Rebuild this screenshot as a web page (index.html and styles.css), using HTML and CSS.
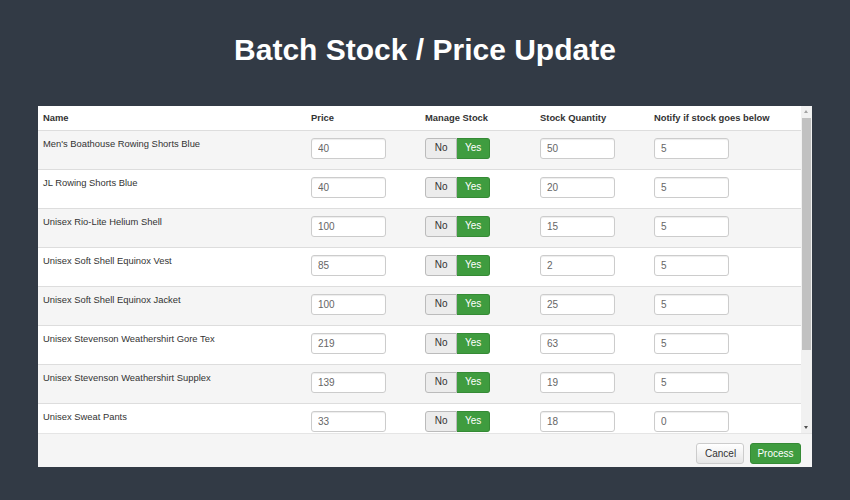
FILE: index.html
```html
<!DOCTYPE html>
<html>
<head>
    <link rel="stylesheet" href="styles.css">
</head>
<body>
    <h1 class="title">Batch Stock / Price Update</h1>

    <div class="panel">
        <div class="table-area">
            <div class="table-wrap">
                <table class="stock-table">
                    <thead>
                        <tr>
                            <th class="col-name">Name</th>
                            <th class="col-price">Price</th>
                            <th class="col-manage">Manage Stock</th>
                            <th class="col-qty">Stock Quantity</th>
                            <th class="col-notify">Notify if stock goes below</th>
                        </tr>
                    </thead>
                    <tbody id="rows"></tbody>
                </table>
            </div>
            <div class="scrollbar">
                <div class="arrow up"></div>
                <div class="thumb"></div>
                <div class="track"></div>
                <div class="arrow down"></div>
            </div>
        </div>
        <div class="footer">
            <button class="btn btn-default">Cancel</button>
            <button class="btn btn-success">Process</button>
        </div>
    </div>

    <script>
        var products = [
            ["Men's Boathouse Rowing Shorts Blue", 40, 50, 5],
            ["JL Rowing Shorts Blue", 40, 20, 5],
            ["Unisex Rio-Lite Helium Shell", 100, 15, 5],
            ["Unisex Soft Shell Equinox Vest", 85, 2, 5],
            ["Unisex Soft Shell Equinox Jacket", 100, 25, 5],
            ["Unisex Stevenson Weathershirt Gore Tex", 219, 63, 5],
            ["Unisex Stevenson Weathershirt Supplex", 139, 19, 5],
            ["Unisex Sweat Pants", 33, 18, 0]
        ];

        var tbody = document.getElementById('rows');
        products.forEach(function (p) {
            var tr = document.createElement('tr');
            tr.innerHTML =
                '<td>' + p[0] + '</td>' +
                '<td><input class="field" type="text" value="' + p[1] + '"></td>' +
                '<td><div class="toggle"><span class="opt">No</span><span class="opt on">Yes</span></div></td>' +
                '<td><input class="field" type="text" value="' + p[2] + '"></td>' +
                '<td><input class="field" type="text" value="' + p[3] + '"></td>';
            tbody.appendChild(tr);
        });
    </script>
</body>
</html>
```

FILE: styles.css
```css
body {
    margin: 0;
    height: 500px;
    background-color: #323a45;
    font-family: "Liberation Sans", Arial, sans-serif;
    display: flex;
    flex-direction: column;
    align-items: center;
}

.title {
    margin: 33px 0 0;
    height: 73px;
    color: #fff;
    font-size: 30px;
    font-weight: bold;
    line-height: 34px;
}

.panel {
    width: 774px;
    background-color: #fff;
    display: flex;
    flex-direction: column;
}

.table-area {
    display: flex;
    height: 327px;
}

.table-wrap {
    flex: 1;
    overflow: hidden;
}

.stock-table {
    width: 100%;
    border-collapse: collapse;
    table-layout: fixed;
    font-size: 9.4px;
    color: #333;
}

.stock-table th {
    height: 24px;
    padding: 0 5px;
    text-align: left;
    font-weight: bold;
    vertical-align: middle;
    box-sizing: border-box;
    border-bottom: 1px solid #ddd;
}

.col-name { width: 268px; }
.col-price { width: 114px; }
.col-manage { width: 115px; }
.col-qty { width: 114px; }

.stock-table td {
    height: 39px;
    padding: 7px 5px 0;
    vertical-align: top;
    border-top: 1px solid #ddd;
    box-sizing: border-box;
    line-height: 12px;
}

.stock-table tbody tr:nth-child(odd) td {
    background-color: #f5f5f5;
}

.stock-table tbody tr:first-child td {
    border-top: none;
}

.field {
    display: block;
    box-sizing: border-box;
    width: 75px;
    height: 21px;
    padding: 0 6px;
    border: 1px solid #ccc;
    border-radius: 3px;
    background: #fff;
    font-family: "Liberation Sans", Arial, sans-serif;
    font-size: 10px;
    color: #666;
    box-shadow: inset 0 1px 1px rgba(0, 0, 0, 0.075);
}

.toggle {
    display: flex;
    width: 65px;
    height: 21px;
}

.opt {
    flex: 1;
    display: flex;
    align-items: center;
    justify-content: center;
    font-size: 10px;
    color: #333;
    background-color: #ececec;
    border: 1px solid #bbb;
    border-radius: 3px 0 0 3px;
}

.opt.on {
    flex: 1.05;
    color: #fff;
    background-color: #3f9c3f;
    border-color: #358a35;
    border-radius: 0 3px 3px 0;
    border-left: none;
}

.scrollbar {
    width: 11px;
    background-color: #f1f1f1;
    display: flex;
    flex-direction: column;
}

.arrow {
    height: 12px;
    position: relative;
}

.arrow::after {
    content: "";
    position: absolute;
    left: 3px;
    border-left: 2.5px solid transparent;
    border-right: 2.5px solid transparent;
}

.arrow.up::after {
    top: 4px;
    border-bottom: 3px solid #a3a3a3;
}

.arrow.down::after {
    top: 5px;
    border-top: 3px solid #505050;
}

.thumb {
    height: 232px;
    margin: 0 1px;
    background-color: #c1c1c1;
}

.track {
    flex: 1;
}

.footer {
    height: 34px;
    background-color: #f5f5f5;
    border-top: 1px solid #e5e5e5;
    box-sizing: border-box;
    display: flex;
    justify-content: flex-end;
    align-items: center;
    padding: 6px 11px 0 0;
    gap: 6px;
}

.btn {
    height: 21px;
    padding: 0 8px;
    font-family: "Liberation Sans", Arial, sans-serif;
    font-size: 10px;
    border-radius: 3px;
    border: 1px solid #ccc;
}

.btn-default {
    width: 48px;
    color: #333;
    background: linear-gradient(#fff, #e6e6e6);
}

.btn-success {
    width: 51px;
    color: #fff;
    background-color: #3f9c3f;
    border-color: #358a35;
    padding: 0;
}
```
